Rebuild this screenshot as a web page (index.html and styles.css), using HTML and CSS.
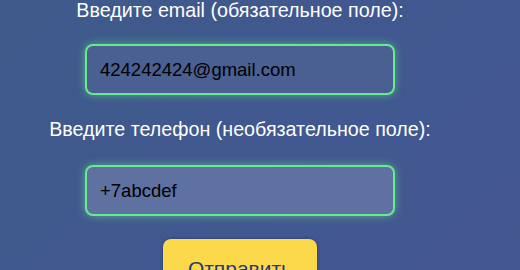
FILE: index.html
```html
<!DOCTYPE html>
<html lang="ru">
<head>
<meta charset="utf-8">
<link rel="stylesheet" href="styles.css">
</head>
<body>
<form class="form">
  <label class="label" for="email">Введите email (обязательное поле):</label>
  <input class="field" id="email" type="text" value="424242424@gmail.com">
  <label class="label label-second" for="phone">Введите телефон (необязательное поле):</label>
  <input class="field field-hover" id="phone" type="text" value="+7abcdef">
  <button class="submit" type="button">Отправить</button>
</form>
</body>
</html>
```
FILE: styles.css
```css
html, body {
  margin: 0;
  height: 100%;
}
body {
  background: linear-gradient(135deg, #3e5a8a 0%, #415890 60%, #44568f 100%);
  font-family: "Liberation Sans", Arial, sans-serif;
  overflow: hidden;
}
.form {
  width: 480px;
  display: flex;
  flex-direction: column;
  align-items: center;
}
.label {
  color: #ffffff;
  font-size: 19.7px;
  line-height: 21px;
  margin: 0 0 23px;
  white-space: nowrap;
}
.label-second {
  margin-bottom: 25px;
}
.field {
  box-sizing: border-box;
  width: 310px;
  height: 51px;
  padding: 0 13px;
  border: 2px solid #66ec8c;
  border-radius: 8px;
  background: #4a5f92;
  color: #000000;
  font-family: "Liberation Sans", Arial, sans-serif;
  font-size: 18.5px;
  box-shadow: 0 0 9px rgba(105, 240, 145, 0.55);
  outline: none;
  margin: 0 0 24px;
}
.field-hover {
  background: #5f71a0;
  margin-bottom: 23px;
}
.submit {
  width: 154px;
  height: 60px;
  padding: 0;
  border: none;
  border-radius: 8px;
  background: #fbd94b;
  color: #1f3a78;
  font-family: "Liberation Sans", Arial, sans-serif;
  font-size: 21px;
  box-shadow: 0 0 3px rgba(20, 30, 90, 0.6);
  cursor: pointer;
}
```
